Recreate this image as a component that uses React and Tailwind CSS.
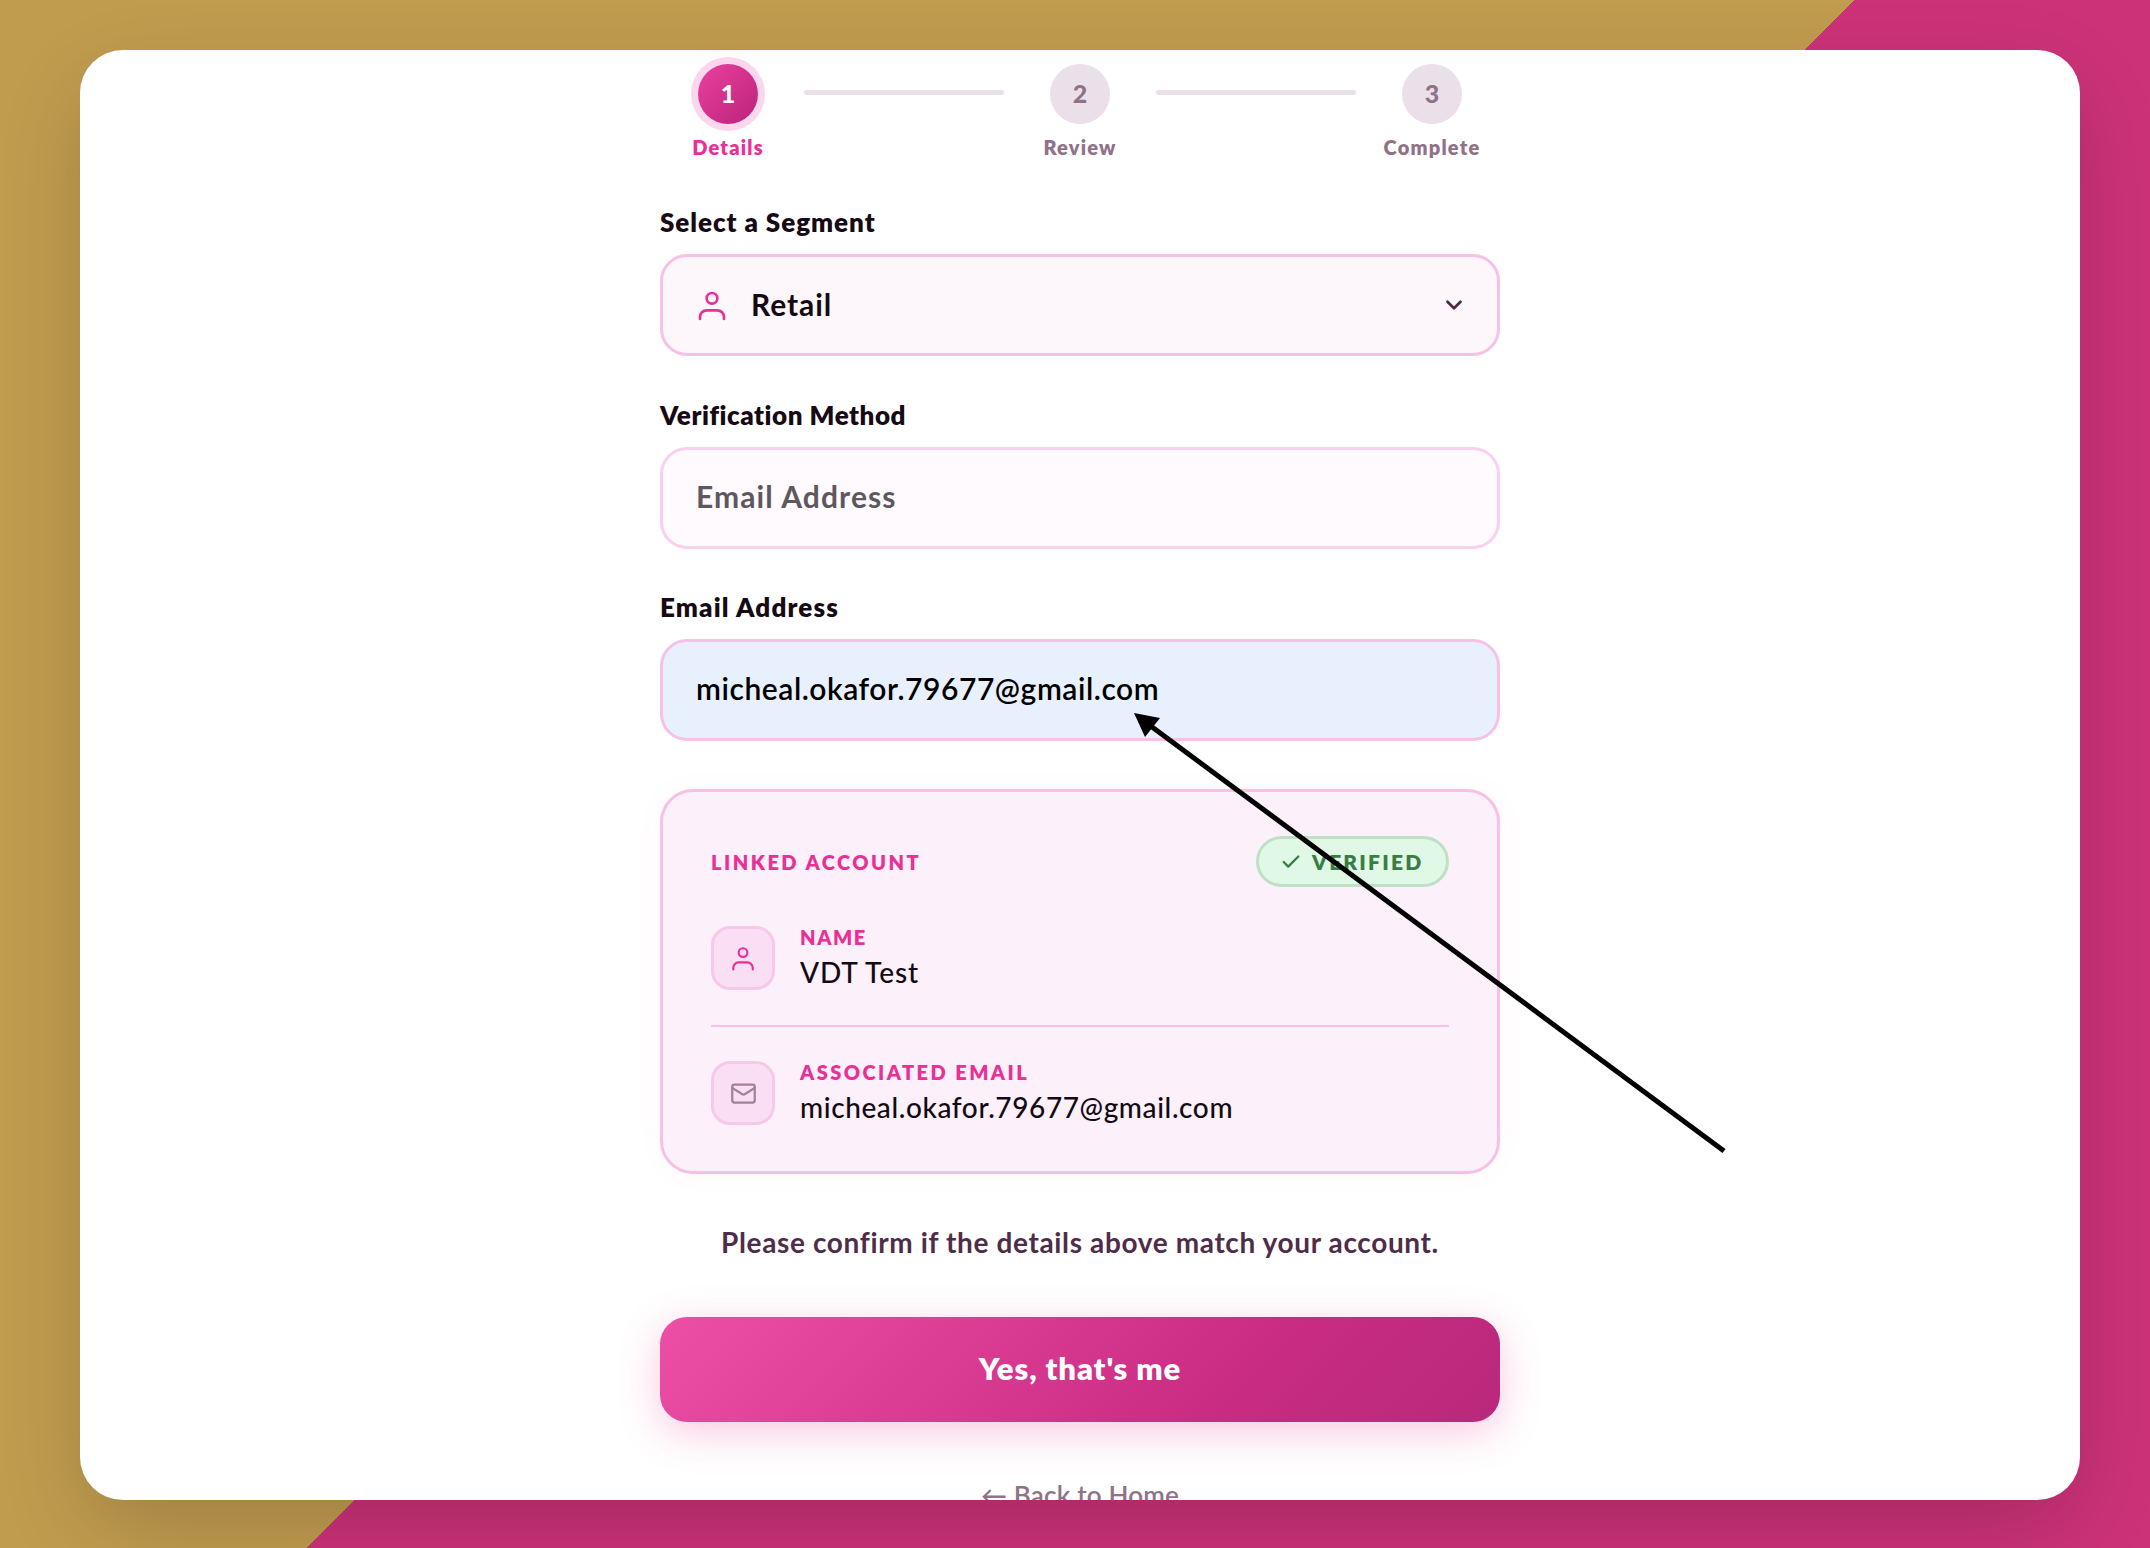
import { Check, ChevronDown, Mail } from "lucide-react";

const STEPS = [
  { n: 1, label: "Details", active: true },
  { n: 2, label: "Review" },
  { n: 3, label: "Complete" },
];

function PersonIcon({ className }) {
  return (
    <svg viewBox="0 0 24 24" fill="none" stroke="currentColor" strokeWidth="2" strokeLinecap="round" strokeLinejoin="round" className={className}>
      <circle cx="12" cy="7" r="4" />
      <path d="M3 22.5V21a5 5 0 0 1 5-5h8a5 5 0 0 1 5 5v1.5" />
    </svg>
  );
}

function Stepper() {
  return (
    <div className="flex items-start">
      {STEPS.map((s, i) => (
        <div key={s.n} className="flex items-start">
          {i > 0 && <div className="mx-[24px] mt-[26px] h-[5px] w-[200px] rounded-full bg-[#ebe0ea]" />}
          <div className="flex w-[104px] flex-col items-center">
            {s.active ? (
              <div className="flex h-[60px] w-[60px] items-center justify-center rounded-full bg-[linear-gradient(135deg,#ec3f9f,#b9247a)] text-[25px] font-black text-white shadow-[0_0_0_7px_#fbd7ee]">{s.n}</div>
            ) : (
              <div className="flex h-[60px] w-[60px] items-center justify-center rounded-full bg-[#ebe0ea] text-[25px] font-black text-[#8f7288]">{s.n}</div>
            )}
            <span className={`mt-[9px] text-[20px] leading-[28px] font-extrabold tracking-[1.2px] whitespace-nowrap ${s.active ? "text-[#ea2f96]" : "text-[#8f7288]"}`}>{s.label}</span>
          </div>
        </div>
      ))}
    </div>
  );
}

function FieldLabel({ className, children }) {
  return <div className={`mb-[16px] text-[26px] leading-[32px] font-extrabold text-[#160a14] ${className}`}>{children}</div>;
}

function InfoRow({ icon, label, labelClass, value, valueClass }) {
  return (
    <div className="flex items-center gap-[25px]">
      <div className="flex h-[64px] w-[64px] items-center justify-center rounded-[19px] border-[3px] border-[#f7c8ea] bg-[#fadff4]">{icon}</div>
      <div>
        <div className={`text-[20px] leading-[22px] font-extrabold text-[#ea2f96] ${labelClass}`}>{label}</div>
        <div className={`mt-[6px] text-[28px] leading-[36px] font-medium text-[#140a14] ${valueClass}`}>{value}</div>
      </div>
    </div>
  );
}

export default function App() {
  return (
    <div className="h-[1548px] w-[2150px] overflow-hidden bg-[linear-gradient(135deg,#c09c4f_50.14%,#cc3278_50.14%)] pt-[50px] pr-[70px] pb-[48px] pl-[80px] font-['Lato',sans-serif]">
      <div className="h-full overflow-hidden rounded-[43px] bg-white shadow-[0_30px_90px_-10px_rgba(0,0,0,0.2)]">
        <div className="mx-auto flex w-[840px] flex-col pt-[14px]">
          <div className="flex justify-center">
            <Stepper />
          </div>

          <div className="mt-[45px]">
            <FieldLabel className="tracking-[0.95px]">Select a Segment</FieldLabel>
            <div className="flex h-[102px] items-center rounded-[27px] border-[3px] border-[#f7c1e6] bg-[#fdf7fc] pr-[30px] pl-[33px]">
              <PersonIcon className="h-[32px] w-[32px] text-[#ea2f96]" />
              <span className="ml-[23px] flex-1 pb-[2px] text-[30px] font-bold tracking-[0.9px] text-[#140a14]">Retail</span>
              <ChevronDown className="h-[26px] w-[26px] text-[#4a2a45]" strokeWidth={2.5} />
            </div>
          </div>

          <div className="mt-[42.5px]">
            <FieldLabel className="tracking-[0.55px]">Verification Method</FieldLabel>
            <div className="flex h-[102px] items-center rounded-[27px] border-[3px] border-[#f9d0ef] bg-[#fefafd] px-[33px]">
              <span className="pb-[2px] text-[30px] font-bold tracking-[1.1px] text-[#5f5760]">Email Address</span>
            </div>
          </div>

          <div className="mt-[42px]">
            <FieldLabel className="tracking-[1.15px]">Email Address</FieldLabel>
            <div className="flex h-[102px] items-center rounded-[27px] border-[3px] border-[#f7c1e6] bg-[#e8f0fe] px-[33px]">
              <span className="pb-[2px] text-[30px] font-semibold tracking-[0.55px] text-[#000]">micheal.okafor.79677@gmail.com</span>
            </div>
          </div>

          <div className="mt-[48.5px] h-[385px] rounded-[33px] border-[3px] border-[#f7c1e6] bg-[#fcf0fa] px-[48px] pt-[44px] shadow-[0_0_24px_rgba(236,72,153,0.05)]">
            <div className="flex items-center justify-between">
              <span className="text-[20px] font-extrabold tracking-[2.5px] text-[#ea2f96]">LINKED ACCOUNT</span>
              <span className="flex h-[51px] w-[193px] items-center gap-[10px] rounded-full border-[3px] border-[#bfe0c3] bg-[#e0f8e6] pl-[21px] text-[21px] font-extrabold tracking-[2.2px] text-[#3a7d44]">
                <Check className="h-[22px] w-[22px]" strokeWidth={2.5} />
                VERIFIED
              </span>
            </div>
            <div className="mt-[39px]">
              <InfoRow icon={<PersonIcon className="h-[26px] w-[26px] text-[#ea2f96]" />} label="NAME" labelClass="tracking-[1.6px]" value="VDT Test" valueClass="tracking-[0.9px]" />
            </div>
            <div className="mt-[35px] h-[2px] bg-[#f7c1e6]" />
            <div className="mt-[34px]">
              <InfoRow icon={<Mail className="h-[27px] w-[27px] text-[#a1809a]" strokeWidth={2} />} label="ASSOCIATED EMAIL" labelClass="tracking-[2.45px]" value="micheal.okafor.79677@gmail.com" valueClass="tracking-[0.6px]" />
            </div>
          </div>

          <p className="mt-[50px] text-center text-[28px] leading-[36px] font-bold tracking-[0.63px] text-[#4f2d4a]">Please confirm if the details above match your account.</p>

          <button className="mt-[57px] h-[105px] rounded-[27px] bg-[linear-gradient(135deg,#ee4fa6,#ca2d83_65%,#b8287b)] pb-[2px] text-[31px] font-extrabold tracking-[0.9px] text-white shadow-[0_10px_40px_rgba(236,72,153,0.3)]">Yes, that's me</button>

          <div className="mt-[59px] text-center text-[26px] leading-[28px] font-semibold tracking-[0.2px] text-[#8e7388]">← Back to Home</div>
        </div>
      </div>

      {/* annotation arrow drawn on top of the form */}
      <svg className="absolute top-0 left-0 h-[1548px] w-[2150px]" viewBox="0 0 2150 1548" fill="none">
        <line x1="1724" y1="1151" x2="1148" y2="724" stroke="#000" strokeWidth="5" />
        <polygon points="1134,713 1160,718 1145,737" fill="#000" />
      </svg>
    </div>
  );
}
